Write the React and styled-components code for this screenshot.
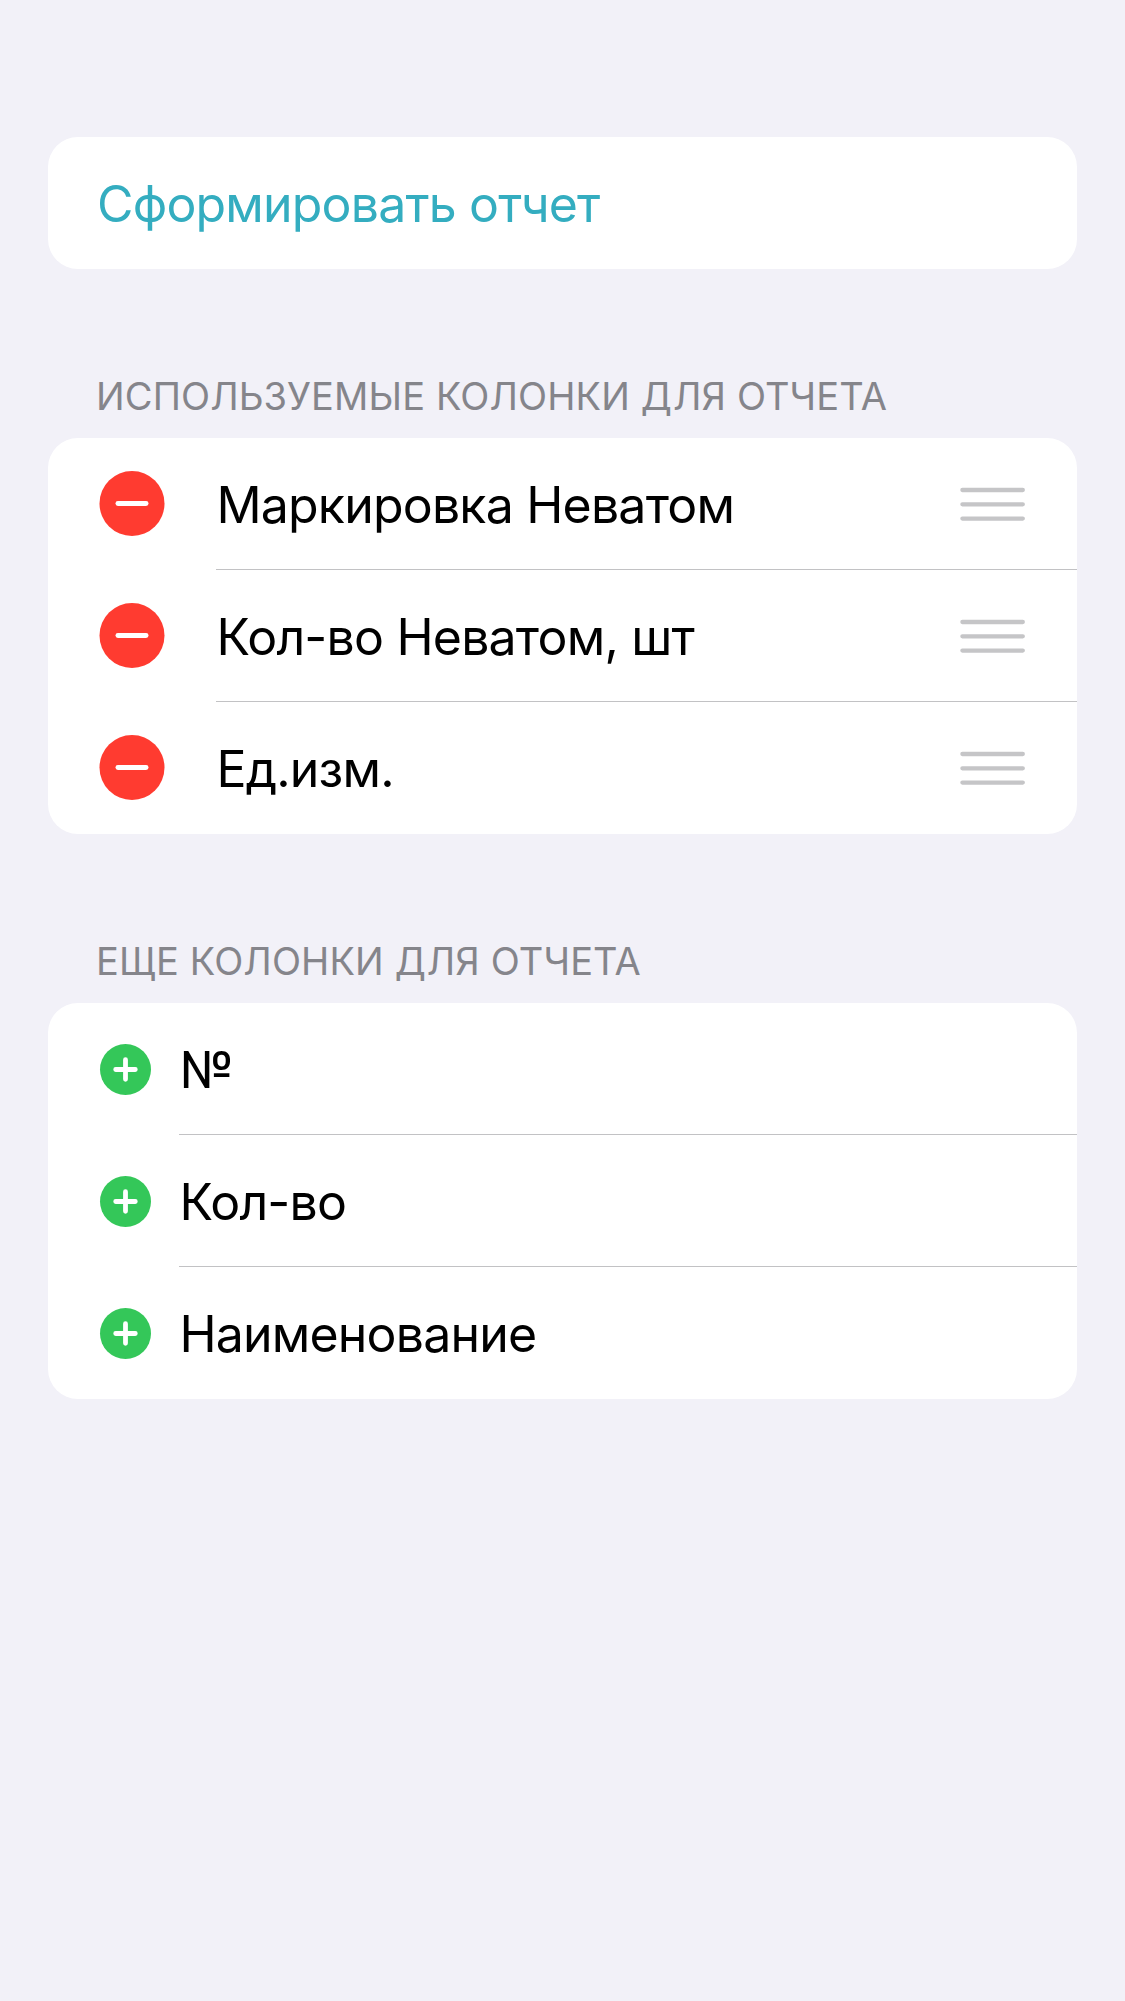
import React, { useState } from "react";
import styled, { createGlobalStyle } from "styled-components";

const GlobalStyle = createGlobalStyle`
  * {
    box-sizing: border-box;
  }

  body {
    margin: 0;
    background-color: #f2f1f8;
    font-family: Inter, "Liberation Sans", sans-serif;
  }
`;

const Page = styled.main`
  display: flex;
  flex-direction: column;
  min-height: 2001px;
  padding: 137px 48px 0;
`;

const Section = styled.section`
  display: flex;
  flex-direction: column;
`;

const SectionTitle = styled.h2`
  display: flex;
  align-items: flex-end;
  height: 169px;
  margin: 0;
  padding: 0 0 19px 48px;
  color: #85858b;
  font-size: 38px;
  font-weight: 400;
  line-height: 46px;
  letter-spacing: 0.12px;
  text-transform: uppercase;
  white-space: nowrap;
`;

const Card = styled.ul`
  width: 1029px;
  margin: 0;
  padding: 0;
  list-style: none;
  background-color: #fff;
  border-radius: 30px;
  overflow: hidden;
`;

const Row = styled.li`
  display: flex;
  height: 132px;
`;

const RowContent = styled.div`
  display: flex;
  flex: 1;
  align-items: center;
  justify-content: space-between;
  padding-right: 51px;
  border-bottom: 1px solid ${({ $last }) => ($last ? "transparent" : "#c2c2c4")};
`;

const Label = styled.span`
  padding: 3px 0 0 0.4px;
  color: #000;
  font-size: 50px;
  line-height: 60px;
  letter-spacing: -0.8px;
  white-space: nowrap;
`;

const ReportButton = styled.button`
  width: 1029px;
  height: 132px;
  padding: 2px 49px 0;
  border: 0;
  border-radius: 30px;
  background-color: #fff;
  color: #34adc0;
  font-family: inherit;
  font-size: 50px;
  letter-spacing: -0.82px;
  text-align: left;
  cursor: pointer;
`;

const IconButton = styled.button`
  display: flex;
  align-items: center;
  width: ${({ $width }) => $width}px;
  height: 132px;
  padding: 0 0 0 51px;
  border: 0;
  background: none;
  cursor: pointer;
`;

const MinusIcon = () => (
  <svg width="66" height="66" viewBox="0 0 66 66">
    <circle cx="33" cy="32.5" r="32.5" fill="#ff3b30" />
    <path d="M18.9 32.5h28.2" stroke="#fff" strokeWidth="4.8" strokeLinecap="round" />
  </svg>
);

const PlusIcon = () => (
  <svg width="52" height="52" viewBox="0 0 52 52">
    <circle cx="26.5" cy="26.5" r="25.5" fill="#34c759" />
    <path
      d="M16.7 26.5h19.6M26.5 16.7v19.6"
      stroke="#fff"
      strokeWidth="4.8"
      strokeLinecap="round"
    />
  </svg>
);

const HandleIcon = () => (
  <svg width="66" height="36" viewBox="0 0 66 36">
    <path
      d="M2.4 4h60.4M2.4 18.3h60.4M2.4 32.6h60.4"
      stroke="#c5c5c7"
      strokeWidth="4.3"
      strokeLinecap="round"
    />
  </svg>
);

const App = () => {
  const [used, setUsed] = useState([
    "Маркировка Неватом",
    "Кол-во Неватом, шт",
    "Ед.изм.",
  ]);
  const [available, setAvailable] = useState(["№", "Кол-во", "Наименование"]);

  const removeColumn = (name) => {
    setUsed(used.filter((item) => item !== name));
    setAvailable([...available, name]);
  };

  const addColumn = (name) => {
    setAvailable(available.filter((item) => item !== name));
    setUsed([...used, name]);
  };

  return (
    <>
      <GlobalStyle />
      <Page>
        <ReportButton>Сформировать отчет</ReportButton>
        <Section>
          <SectionTitle>Используемые колонки для отчета</SectionTitle>
          <Card>
            {used.map((name, i) => (
              <Row key={name}>
                <IconButton $width={168} onClick={() => removeColumn(name)}>
                  <MinusIcon />
                </IconButton>
                <RowContent $last={i === used.length - 1}>
                  <Label>{name}</Label>
                  <HandleIcon />
                </RowContent>
              </Row>
            ))}
          </Card>
        </Section>
        <Section>
          <SectionTitle>Еще колонки для отчета</SectionTitle>
          <Card>
            {available.map((name, i) => (
              <Row key={name}>
                <IconButton $width={131} onClick={() => addColumn(name)}>
                  <PlusIcon />
                </IconButton>
                <RowContent $last={i === available.length - 1}>
                  <Label>{name}</Label>
                </RowContent>
              </Row>
            ))}
          </Card>
        </Section>
      </Page>
    </>
  );
};

export default App;
